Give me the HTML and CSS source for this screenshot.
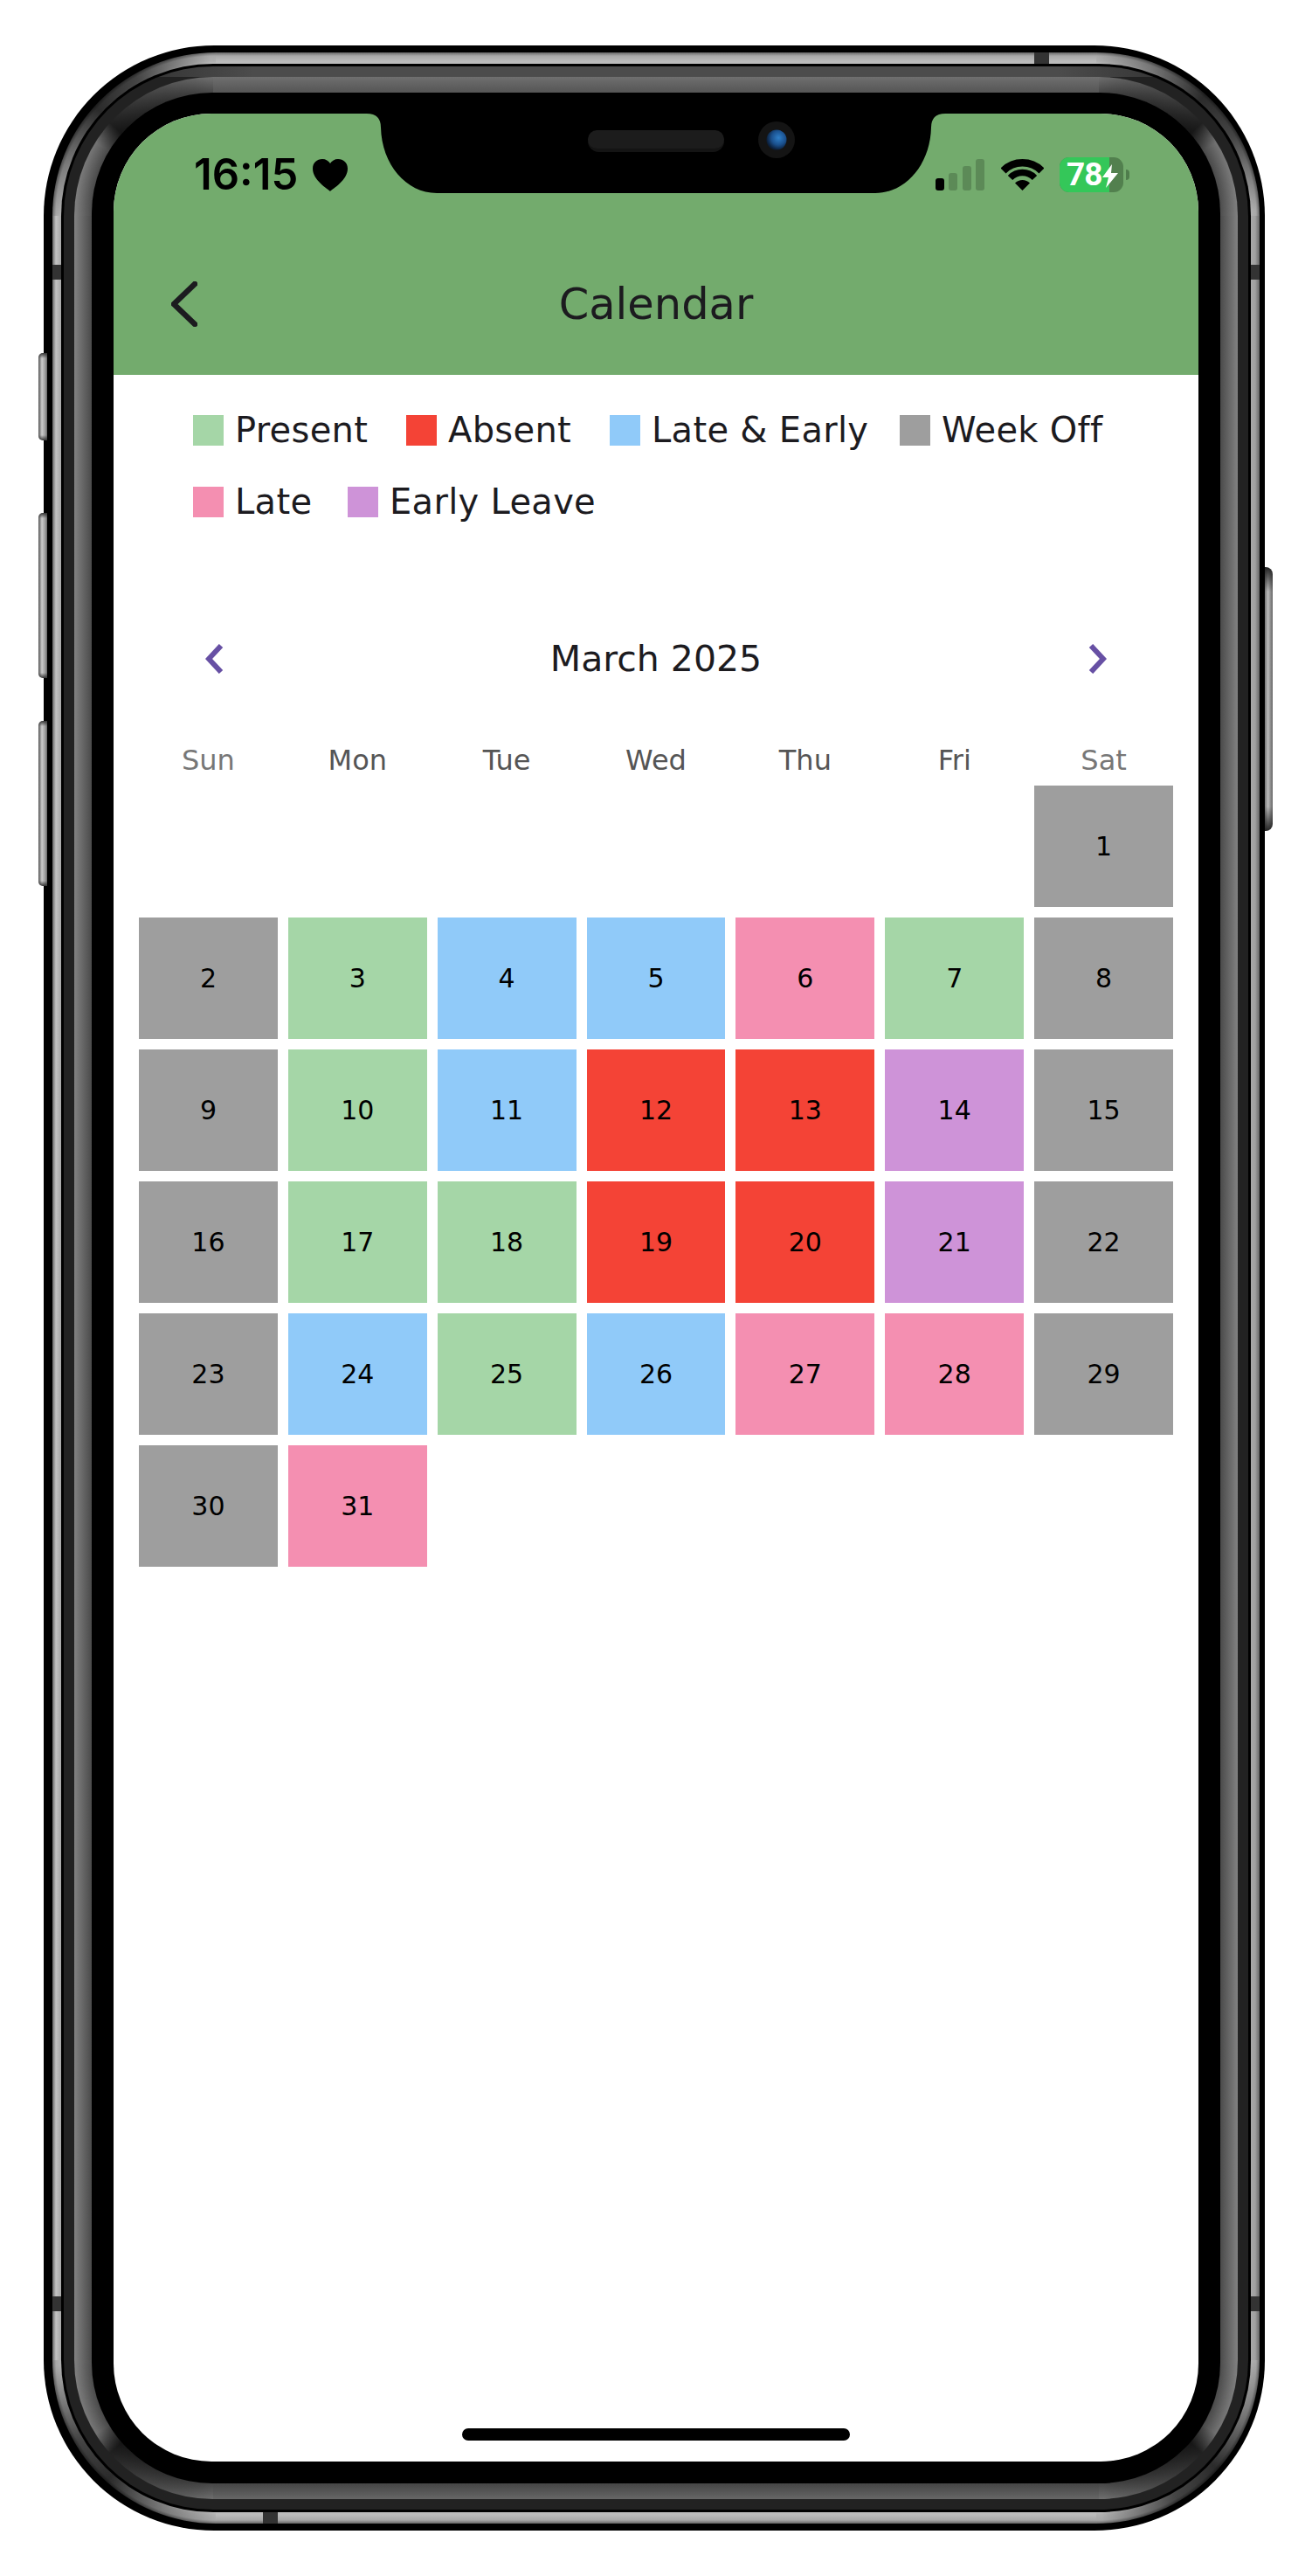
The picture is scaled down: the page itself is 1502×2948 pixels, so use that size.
FILE: index.html
```html
<!DOCTYPE html>
<html lang="en">
<head>
    <meta charset="UTF-8">
    <meta name="viewport" content="width=device-width, initial-scale=1.0">
    <title>Calendar</title>
    <link rel="stylesheet" href="styles.css">
</head>
<body>
    <div class="phone">
        <span class="side-btn side-mute"></span>
        <span class="side-btn side-up"></span>
        <span class="side-btn side-down"></span>
        <span class="side-btn side-power"></span>
        <span class="band band-top"></span>
        <span class="band band-left-a"></span>
        <span class="band band-right-a"></span>
        <span class="band band-left-b"></span>
        <span class="band band-right-b"></span>
        <span class="band band-bottom"></span>

        <div class="ring-silver">
            <div class="ring-gap">
                <div class="ring-dark">
                    <div class="ring-steel">
                        <div class="bezel">
                            <div class="screen">
                                <svg class="notch" viewBox="0 0 662 91" width="662" height="91">
                                    <defs>
                                        <radialGradient id="lens" cx="0.6" cy="0.4" r="0.6">
                                            <stop offset="0" stop-color="#2f7fc8"/>
                                            <stop offset="0.6" stop-color="#1a4f8c"/>
                                            <stop offset="1" stop-color="#0b1e38"/>
                                        </radialGradient>
                                    </defs>
                                    <path d="M0 0Q16 0 16 16C17 58 45 91 80 91H582C617 91 645 58 646 16Q646 0 662 0Z" fill="#000"/>
                                    <rect x="253" y="19" width="156" height="25" rx="12.5" fill="#141414"/>
                                    <rect x="253" y="19" width="156" height="21" rx="10.5" fill="#1c1c1c"/>
                                    <circle cx="469" cy="30" r="21" fill="#141414"/>
                                    <circle cx="469" cy="30" r="11.5" fill="url(#lens)"/>
                                </svg>

                                <header class="app-header">
                                    <div class="status-bar">
                                        <div class="status-left">
                                            <span class="clock">16:15</span>
                                            <svg class="heart" viewBox="0 0 40 37" width="40" height="37"><path d="M20 37C17 34 0 24 0 11 0 4 5 0 11 0c4 0 7 2 9 5 2-3 5-5 9-5 6 0 11 4 11 11 0 13-17 23-20 26Z" fill="#000"/></svg>
                                        </div>
                                        <div class="status-right">
                                            <div class="signal">
                                                <span class="bar bar-1"></span>
                                                <span class="bar bar-2"></span>
                                                <span class="bar bar-3"></span>
                                                <span class="bar bar-4"></span>
                                            </div>
                                            <svg class="wifi" viewBox="0 0 49 36" width="49" height="36">
                                                <path d="M2.5 13.5A31 31 0 0 1 46.5 13.5" fill="none" stroke="#000" stroke-width="8.5"/>
                                                <path d="M10.5 21.5A19.500 19.500 0 0 1 38.500 21.500" fill="none" stroke="#000" stroke-width="7.500"/>
                                                <path d="M24.500 36L16 27.500A12 12 0 0 1 33 27.500Z" fill="#000"/>
                                            </svg>
                                            <div class="battery">
                                                <span class="battery-fill" style="width: 78%"></span>
                                                <span class="battery-label">78</span>
                                                <svg class="bolt" viewBox="0 0 18 27" width="18" height="27"><path d="M11 0 0 15h7L4 27 18 10h-8Z" fill="#fff"/></svg>
                                            </div>
                                            <span class="battery-tip"></span>
                                        </div>
                                    </div>
                                    <div class="title-row">
                                        <svg class="back" viewBox="0 0 30 52" width="30" height="52"><path d="M27 3 3 26l24 23" fill="none" stroke="#1c1b1f" stroke-width="6.5" stroke-linecap="round" stroke-linejoin="round"/></svg>
                                        <h1>Calendar</h1>
                                    </div>
                                </header>

                                <section class="legend">
                                    <div class="legend-row legend-row-1">
                                        <div class="legend-item"><span class="swatch present"></span>Present</div>
                                        <div class="legend-item"><span class="swatch absent"></span>Absent</div>
                                        <div class="legend-item"><span class="swatch both"></span>Late &amp; Early</div>
                                        <div class="legend-item"><span class="swatch off"></span>Week Off</div>
                                    </div>
                                    <div class="legend-row legend-row-2">
                                        <div class="legend-item"><span class="swatch late"></span>Late</div>
                                        <div class="legend-item"><span class="swatch early"></span>Early Leave</div>
                                    </div>
                                </section>

                                <div class="month-nav">
                                    <svg viewBox="0 0 21 34" width="21" height="34"><path d="M18 2 4 17l14 15" fill="none" stroke="#6750a4" stroke-width="6"/></svg>
                                    <span class="month-name">March 2025</span>
                                    <svg viewBox="0 0 21 34" width="21" height="34"><path d="M3 2l14 15L3 32" fill="none" stroke="#6750a4" stroke-width="6"/></svg>
                                </div>

                                <div class="weekdays">
                                    <span class="weekend">Sun</span>
                                    <span>Mon</span>
                                    <span>Tue</span>
                                    <span>Wed</span>
                                    <span>Thu</span>
                                    <span>Fri</span>
                                    <span class="weekend">Sat</span>
                                </div>

                                <div class="days">
                                    <div class="blank"></div>
                                    <div class="blank"></div>
                                    <div class="blank"></div>
                                    <div class="blank"></div>
                                    <div class="blank"></div>
                                    <div class="blank"></div>
                                    <div class="day off">1</div>

                                    <div class="day off">2</div>
                                    <div class="day present">3</div>
                                    <div class="day both">4</div>
                                    <div class="day both">5</div>
                                    <div class="day late">6</div>
                                    <div class="day present">7</div>
                                    <div class="day off">8</div>

                                    <div class="day off">9</div>
                                    <div class="day present">10</div>
                                    <div class="day both">11</div>
                                    <div class="day absent">12</div>
                                    <div class="day absent">13</div>
                                    <div class="day early">14</div>
                                    <div class="day off">15</div>

                                    <div class="day off">16</div>
                                    <div class="day present">17</div>
                                    <div class="day present">18</div>
                                    <div class="day absent">19</div>
                                    <div class="day absent">20</div>
                                    <div class="day early">21</div>
                                    <div class="day off">22</div>

                                    <div class="day off">23</div>
                                    <div class="day both">24</div>
                                    <div class="day present">25</div>
                                    <div class="day both">26</div>
                                    <div class="day late">27</div>
                                    <div class="day late">28</div>
                                    <div class="day off">29</div>

                                    <div class="day off">30</div>
                                    <div class="day late">31</div>
                                </div>

                                <div class="home-bar"></div>
                            </div>
                        </div>
                    </div>
                </div>
            </div>
        </div>
    </div>
</body>
</html>
```
FILE: styles.css
```css
* { box-sizing: border-box; }
body { margin: 0; background: #fff; font-family: "DejaVu Sans", "Open Sans", sans-serif; color: #1c1b1f; }

/* phone frame: nested rings, each one a padding step inwards */
.phone { position: relative; width: 1398px; height: 2844px; margin: 52px 0 0 50px; padding: 8px 6px 8px 10px; background: #000; border-radius: 195px; }

/* corners: a radial tile for the metal, an alpha conic tile on top of it for the shading */
.ring-silver { height: 100%; padding: 13px 10px; border-radius: 187px;
    --metal: #bbb 174px, #b0b0b0 177px, #a8a8a8 183px, #666 187px;
    --shade: rgba(0,0,0,0) 0deg, rgba(0,0,0,.3) 20deg, rgba(0,0,0,.75) 42deg, rgba(0,0,0,.6) 60deg, rgba(0,0,0,0) 88deg;
    background:
        conic-gradient(from 270deg at 100% 100%, var(--shade)) left top / 187px 187px no-repeat,
        conic-gradient(from 0deg at 0 100%, var(--shade)) right top / 187px 187px no-repeat,
        conic-gradient(from 90deg at 0 0, var(--shade)) right bottom / 187px 187px no-repeat,
        conic-gradient(from 180deg at 100% 0, var(--shade)) left bottom / 187px 187px no-repeat,
        radial-gradient(circle at 100% 100%, var(--metal)) left top / 187px 187px no-repeat,
        radial-gradient(circle at 0 100%, var(--metal)) right top / 187px 187px no-repeat,
        radial-gradient(circle at 0 0, var(--metal)) right bottom / 187px 187px no-repeat,
        radial-gradient(circle at 100% 0, var(--metal)) left bottom / 187px 187px no-repeat,
        linear-gradient(#666, #a8a8a8 4px, #bbb 10px, #bbb) center top / calc(100% - 374px) 13px no-repeat,
        linear-gradient(#bbb, #bbb 3px, #a8a8a8 9px, #666) center bottom / calc(100% - 374px) 13px no-repeat,
        linear-gradient(to right, #666, #c4c4c4 40%, #a8a8a8) left center / 10px calc(100% - 374px) no-repeat,
        linear-gradient(to right, #a8a8a8, #a0a0a0 50%, #666) right center / 10px calc(100% - 374px) no-repeat;
}
.ring-gap { height: 100%; padding: 3px; background: #000; border-radius: 174px; }
.ring-dark { height: 100%; padding: 12px; border-radius: 171px;
    background: linear-gradient(to right, #222, #4c4c4c 16%, #4c4c4c 84%, #222) top / 100% 12px no-repeat, #222;
}
.ring-steel { height: 100%; padding: 18px 20px; border-radius: 159px;
    --metal: #4a4a4a 138px, #828282 159px;
    --shade: rgba(0,0,0,0) 0deg, rgba(0,0,0,.1) 32deg, rgba(0,0,0,.75) 42deg, rgba(0,0,0,.5) 60deg, rgba(0,0,0,.15) 88deg;
    --shade-flip: rgba(0,0,0,.15) 0deg, rgba(0,0,0,.5) 30deg, rgba(0,0,0,.75) 48deg, rgba(0,0,0,.1) 58deg, rgba(0,0,0,0) 90deg;
    background:
        conic-gradient(from 270deg at 100% 100%, var(--shade)) left top / 159px 159px no-repeat,
        conic-gradient(from 0deg at 0 100%, var(--shade-flip)) right top / 159px 159px no-repeat,
        conic-gradient(from 90deg at 0 0, var(--shade)) right bottom / 159px 159px no-repeat,
        conic-gradient(from 180deg at 100% 0, var(--shade-flip)) left bottom / 159px 159px no-repeat,
        radial-gradient(circle at 100% 100%, var(--metal)) left top / 159px 159px no-repeat,
        radial-gradient(circle at 0 100%, var(--metal)) right top / 159px 159px no-repeat,
        radial-gradient(circle at 0 0, var(--metal)) right bottom / 159px 159px no-repeat,
        radial-gradient(circle at 100% 0, var(--metal)) left bottom / 159px 159px no-repeat,
        linear-gradient(#6f6f6f, #555) center top / calc(100% - 318px) 18px no-repeat,
        linear-gradient(#454545, #666) center bottom / calc(100% - 318px) 18px no-repeat,
        linear-gradient(to right, #828282, #4a4a4a) left center / 20px calc(100% - 318px) no-repeat,
        linear-gradient(to right, #4a4a4a, #828282) right center / 20px calc(100% - 318px) no-repeat;
}
.bezel { height: 100%; padding: 24px 25px 25px; background: #000; border-radius: 138px; }
.screen { position: relative; display: flex; flex-direction: column; height: 100%; background: #fff; border-radius: 112px; overflow: hidden; }

.side-btn { position: absolute; width: 10px; border-radius: 5px 0 0 5px;
    background: linear-gradient(#333, transparent 6px, transparent calc(100% - 6px), #333), linear-gradient(to right, #555, #ccc 40%, #999 80%, #666);
}
.side-mute { left: -6px; top: 352px; height: 100px; }
.side-up { left: -6px; top: 535px; height: 189px; }
.side-down { left: -6px; top: 773px; height: 189px; }
.side-power { left: 1398px; top: 597px; width: 9px; height: 302px; border-radius: 0 8px 8px 0;
    background: linear-gradient(#222, transparent 28px, transparent calc(100% - 28px), #222), linear-gradient(to right, #777, #bbb 40%, #666);
}

.band { position: absolute; background: #333; }
.band-top { left: 1134px; top: 8px; width: 17px; height: 13px; }
.band-left-a { left: 10px; top: 251px; width: 10px; height: 17px; }
.band-right-a { left: 1382px; top: 251px; width: 10px; height: 17px; }
.band-left-b { left: 10px; top: 2576px; width: 10px; height: 17px; }
.band-right-b { left: 1382px; top: 2576px; width: 10px; height: 17px; }
.band-bottom { left: 251px; top: 2823px; width: 17px; height: 13px; }

.notch { position: absolute; top: 0; left: 290px; z-index: 2; }

/* app header */
.app-header { height: 299px; padding-top: 45px; background: #73ab6d; }
.status-bar { display: flex; justify-content: space-between; align-items: center; height: 50px; padding: 0 79px 0 92px; }
.status-left { display: flex; align-items: center; gap: 17px; }
.clock { font-family: Inter, sans-serif; font-size: 49px; font-weight: 600; line-height: 50px; color: #000; }
.status-right { display: flex; align-items: center; }
.signal { display: flex; align-items: flex-end; gap: 5.500px; height: 36px; margin-right: 19px; }
.bar { width: 10px; border-radius: 3px; background: #5c8a57; }
.bar-1 { height: 14px; background: #000; }
.bar-2 { height: 20px; }
.bar-3 { height: 28px; }
.bar-4 { height: 36px; }
.wifi { margin-right: 18px; }
.battery { position: relative; width: 73px; height: 40px; border-radius: 11px; background: #52804e; }
.battery-fill { display: block; height: 100%; background: #34c759; border-radius: 11px 0 0 11px; }
.battery-label { position: absolute; left: 8px; top: 0; font-family: Roboto, sans-serif; font-size: 37px; font-weight: 700; line-height: 40px; color: #fff; letter-spacing: -1px; }
.bolt { position: absolute; left: 49px; top: 8px; }
.battery-tip { width: 4px; height: 12px; margin-left: 3px; background: #4f7d4c; border-radius: 0 4px 4px 0; }

.title-row { position: relative; display: flex; align-items: center; justify-content: center; height: 96px; margin-top: 75px; }
.back { position: absolute; left: 66px; top: 22px; }
h1 { margin: 0; font-size: 49.5px; font-weight: 400; line-height: 92px; }

/* legend */
.legend { display: flex; flex-direction: column; gap: 47px; padding: 46px 0 0 91px; }
.legend-row { display: grid; }
.legend-row-1 { grid-template-columns: 244px 233px 332px 1fr; }
.legend-row-2 { grid-template-columns: 177px 1fr; }
.legend-item { display: flex; align-items: center; gap: 13px; height: 35px; font-size: 40px; line-height: 35px; letter-spacing: 0.3px; white-space: nowrap; }
.swatch { width: 35px; height: 35px; }

.present { background: #a5d6a7; }
.absent { background: #f44336; }
.both { background: #90caf9; }
.off { background: #9e9e9e; }
.late { background: #f48fb1; }
.early { background: #ce93d8; }

/* calendar */
.month-nav { display: flex; justify-content: space-between; align-items: center; height: 50px; margin-top: 137px; padding: 0 105px; }
.month-name { font-size: 41px; line-height: 46px; }
.weekdays, .days { display: grid; grid-template-columns: repeat(7, 1fr); column-gap: 12px; padding: 0 29px; }
.weekdays { height: 40px; margin-top: 71px; margin-bottom: 9px; font-size: 32px; line-height: 40px; text-align: center; color: #555; }
.weekend { color: #777; }
.days { grid-auto-rows: 139px; row-gap: 12px; }
.day { display: flex; align-items: center; justify-content: center; font-size: 30px; color: #000; }

.home-bar { width: 444px; height: 14px; margin: auto auto 24px; background: #000; border-radius: 7px; }
```
